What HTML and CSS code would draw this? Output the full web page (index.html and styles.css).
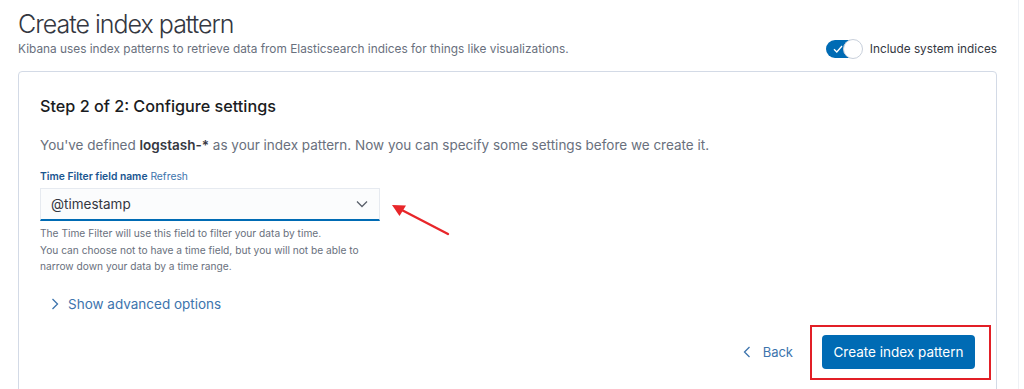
FILE: index.html
```html
<!DOCTYPE html>
<html lang="en">
<head>
    <meta charset="UTF-8">
    <meta name="viewport" content="width=device-width, initial-scale=1.0">
    <title>Create index pattern</title>
    <link rel="stylesheet" href="styles.css">
</head>
<body>

    <div class="page">
        <div class="page-header">
            <h1 class="title">Create index pattern</h1>
            <div class="header-row">
                <p class="subtitle">Kibana uses index patterns to retrieve data from Elasticsearch indices for things like visualizations.</p>
                <label class="switch">
                    <span class="switch-track">
                        <svg class="switch-check" width="10" height="8" viewBox="0 0 10 8">
                            <path d="M1 4.2 L3.8 7 L9 1" fill="none" stroke="#fff" stroke-width="1.3"/>
                        </svg>
                        <span class="switch-thumb"></span>
                    </span>
                    <span class="switch-label">Include system indices</span>
                </label>
            </div>
        </div>

        <div class="panel">
            <h2 class="step-title">Step 2 of 2: Configure settings</h2>
            <p class="intro">You've defined <b>logstash-*</b> as your index pattern. Now you can specify some settings before we create it.</p>

            <div class="form-row">
                <div class="form-label">
                    <span class="label-text">Time Filter field name</span>
                    <a class="refresh-link">Refresh</a>
                </div>
                <div class="select-wrap">
                    <div class="select">
                        <span>@timestamp</span>
                        <svg class="select-arrow" width="12" height="8" viewBox="0 0 12 8">
                            <path d="M1 1.5 L6 6.5 L11 1.5" fill="none" stroke="#5a606b" stroke-width="1.3"/>
                        </svg>
                    </div>
                    <!-- стрелка-пометка со скриншота -->
                    <svg class="red-arrow" width="62" height="36" viewBox="0 0 62 36">
                        <path d="M58 32 L6 5" stroke="#e8262a" stroke-width="2.4" stroke-linecap="round"/>
                        <path d="M2 3 L16 3.5 L9.5 14 Z" fill="#e8262a"/>
                    </svg>
                </div>
                <div class="help-text">
                    The Time Filter will use this field to filter your data by time.<br>
                    You can choose not to have a time field, but you will not be able to<br>
                    narrow down your data by a time range.
                </div>
            </div>

            <div class="advanced">
                <svg class="advanced-arrow" width="8" height="12" viewBox="0 0 8 12">
                    <path d="M1.5 1 L6.5 6 L1.5 11" fill="none" stroke="#3d74ad" stroke-width="1.3"/>
                </svg>
                <span>Show advanced options</span>
            </div>

            <div class="actions">
                <a class="back-btn">
                    <svg width="8" height="12" viewBox="0 0 8 12">
                        <path d="M6.5 1 L1.5 6 L6.5 11" fill="none" stroke="#3d74ad" stroke-width="1.3"/>
                    </svg>
                    Back
                </a>
                <div class="highlight">
                    <button class="primary-btn">Create index pattern</button>
                </div>
            </div>
        </div>
    </div>

</body>
</html>
```

FILE: styles.css
```css
body {
    font-family: Inter, "Noto Sans", sans-serif;
    margin: 0;
    padding: 0;
    background-color: #fff;
    color: #343741;
}
.page {
    width: 979px;
    padding: 8px 21px 0 18px;
    border-right: 1px solid #eef1f5;
    height: 381px;
    overflow: hidden;
}
.title {
    margin: 0;
    font-size: 25px;
    font-weight: 300;
    letter-spacing: -0.04em;
    line-height: 32px;
    color: #343741;
}
.header-row {
    display: flex;
    justify-content: space-between;
    align-items: center;
    margin-top: 0;
}
.subtitle {
    margin: 0;
    font-size: 11.85px;
    line-height: 18px;
    color: #69707d;
}
.switch {
    display: flex;
    align-items: center;
    gap: 8px;
}
.switch-track {
    position: relative;
    width: 36px;
    height: 18px;
    border-radius: 9px;
    background-color: #006bb4;
    display: inline-block;
}
.switch-check {
    position: absolute;
    left: 7px;
    top: 5px;
}
.switch-thumb {
    position: absolute;
    right: -1px;
    top: -1px;
    width: 20px;
    height: 20px;
    border-radius: 50%;
    background-color: #fff;
    border: 1px solid #c9d0db;
    box-sizing: border-box;
}
.switch-label {
    font-size: 11.8px;
    color: #343741;
}
.panel {
    margin-top: 13px;
    border: 1px solid #d3dae6;
    border-radius: 4px;
    padding: 23px 21px 16px 21px;
    height: 400px;
}
.step-title {
    margin: 0;
    font-size: 16.2px;
    font-weight: 500;
    line-height: 22px;
    color: #1a1c21;
}
.intro {
    margin: 17px 0 0 0;
    font-size: 13.5px;
    line-height: 22px;
    color: #69707d;
}
.intro b {
    color: #343741;
    font-weight: 600;
}
.form-row {
    margin-top: 12px;
}
.form-label {
    font-size: 10.3px;
    line-height: 16px;
}
.label-text {
    font-weight: 600;
    color: #1a5690;
}
.refresh-link {
    color: #3d74ad;
}
.select-wrap {
    position: relative;
    margin-top: 4px;
    width: 340px;
}
.select {
    display: flex;
    justify-content: space-between;
    align-items: center;
    padding: 0 10px 0 10px;
    background-color: #fbfcfd;
    border: 1px solid #e6eaf0;
    border-bottom: 2px solid #006bb4;
    box-sizing: border-box;
    height: 33px;
    font-size: 13.5px;
    color: #343741;
}
.select-arrow {
    margin-right: 1px;
}
.red-arrow {
    position: absolute;
    left: 350px;
    top: 14px;
}
.help-text {
    margin-top: 4px;
    font-size: 10.2px;
    line-height: 16.5px;
    color: #69707d;
}
.advanced {
    display: flex;
    align-items: center;
    gap: 9px;
    margin-top: 21px;
    padding-left: 11px;
    font-size: 13.5px;
    color: #3d74ad;
}
.actions {
    display: flex;
    justify-content: flex-end;
    align-items: center;
    margin-top: 13px;
}
.back-btn {
    display: flex;
    align-items: center;
    gap: 12px;
    font-size: 13px;
    color: #3d74ad;
    margin-right: 17px;
}
.highlight {
    border: 2px solid #e21f26;
    padding: 8px 14px 9px 10px;
    margin-right: -16px;
}
.primary-btn {
    background-color: #006bb4;
    border: none;
    border-radius: 4px;
    color: #fff;
    font-family: inherit;
    font-size: 13.5px;
    height: 34px;
    padding: 0 11px;
    width: 153px;
}
```
